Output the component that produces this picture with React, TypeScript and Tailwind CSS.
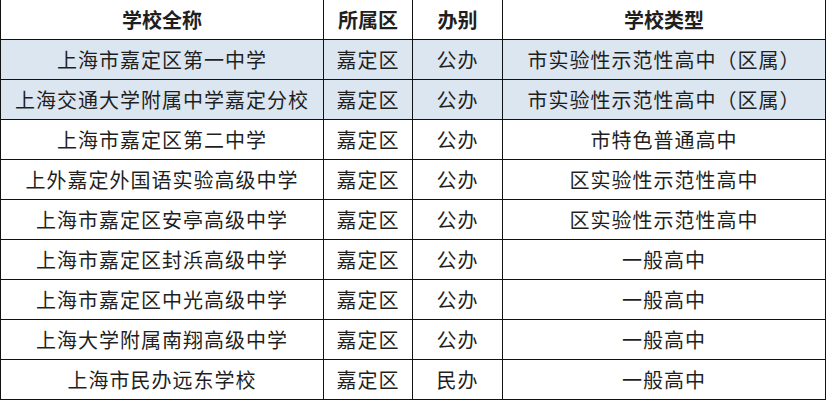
const rows = [
  { name: '上海市嘉定区第一中学', area: '嘉定区', kind: '公办', type: '市实验性示范性高中（区属）', hl: true },
  { name: '上海交通大学附属中学嘉定分校', area: '嘉定区', kind: '公办', type: '市实验性示范性高中（区属）', hl: true },
  { name: '上海市嘉定区第二中学', area: '嘉定区', kind: '公办', type: '市特色普通高中' },
  { name: '上外嘉定外国语实验高级中学', area: '嘉定区', kind: '公办', type: '区实验性示范性高中' },
  { name: '上海市嘉定区安亭高级中学', area: '嘉定区', kind: '公办', type: '区实验性示范性高中' },
  { name: '上海市嘉定区封浜高级中学', area: '嘉定区', kind: '公办', type: '一般高中' },
  { name: '上海市嘉定区中光高级中学', area: '嘉定区', kind: '公办', type: '一般高中' },
  { name: '上海大学附属南翔高级中学', area: '嘉定区', kind: '公办', type: '一般高中' },
  { name: '上海市民办远东学校', area: '嘉定区', kind: '民办', type: '一般高中' },
];

const cell = 'h-10 flex items-center justify-center border-r border-b border-[#111]';

export default function App() {
  return (
    <div
      className="w-[826px] h-[401px] bg-white text-[#1f1f1f] text-[20px] leading-none"
      style={{ fontFamily: '"Noto Sans CJK SC", "Noto Sans", sans-serif' }}
    >
      <div className="grid grid-cols-[323px_89px_90px_323px] border-l border-[#111] w-[826px]">
        <div className={`${cell} font-bold`}>学校全称</div>
        <div className={`${cell} font-bold`}>所属区</div>
        <div className={`${cell} font-bold`}>办别</div>
        <div className={`${cell} font-bold`}>学校类型</div>
        {rows.map((r) => {
          const bg = r.hl ? 'bg-[#dce6f1]' : 'bg-white';
          return [
            <div key={r.name + 'a'} className={`${cell} ${bg} tracking-[1px]`}>{r.name}</div>,
            <div key={r.name + 'b'} className={`${cell} ${bg} tracking-[1px]`}>{r.area}</div>,
            <div key={r.name + 'c'} className={`${cell} ${bg} tracking-[1px]`}>{r.kind}</div>,
            <div key={r.name + 'd'} className={`${cell} ${bg} tracking-[1px]`}>{r.type}</div>,
          ];
        })}
      </div>
    </div>
  );
}
